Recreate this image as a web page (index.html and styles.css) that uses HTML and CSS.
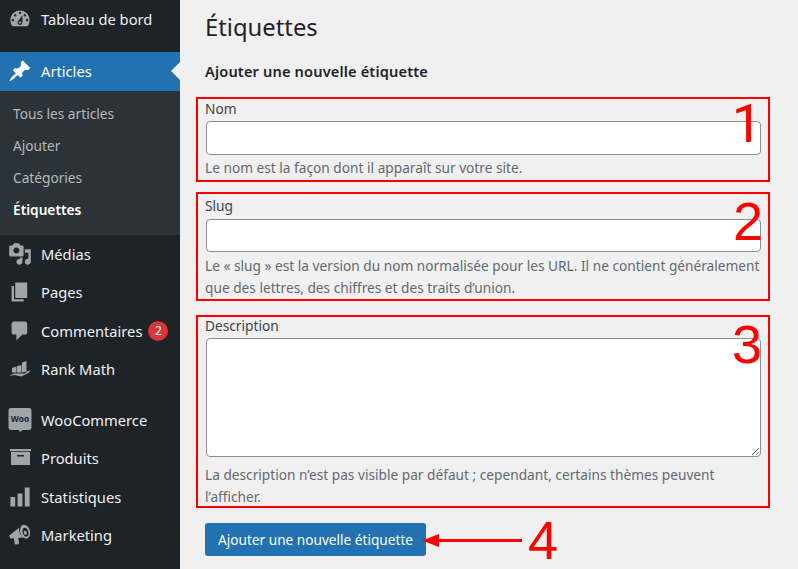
FILE: index.html
```html
<!DOCTYPE html>
<html lang="fr">
<head>
    <meta charset="UTF-8">
    <meta name="viewport" content="width=device-width, initial-scale=1.0">
    <title>Étiquettes</title>
    <link rel="stylesheet" href="styles.css">
</head>
<body>
    <div class="layout">
        <nav class="sidebar">
            <ul class="menu">
                <li class="menu-item">
                    <svg class="menu-icon" viewBox="0 0 20 20"><path d="M3.76 16h12.48c1.1-1.37 1.76-3.11 1.76-5 0-4.42-3.58-8-8-8s-8 3.58-8 8c0 1.89.66 3.63 1.76 5zM10 4c.55 0 1 .45 1 1s-.45 1-1 1-1-.45-1-1 .45-1 1-1zM6 6c.55 0 1 .45 1 1s-.45 1-1 1-1-.45-1-1 .45-1 1-1zm8 0c.55 0 1 .45 1 1s-.45 1-1 1-1-.45-1-1 .45-1 1-1zm-5.37 5.55L12 7v6c0 1.1-.9 2-2 2s-2-.9-2-2c0-.57.24-1.08.63-1.45zM4 10c.55 0 1 .45 1 1s-.45 1-1 1-1-.45-1-1 .45-1 1-1zm12 0c.55 0 1 .45 1 1s-.45 1-1 1-1-.45-1-1 .45-1 1-1zm-5 3c0-.55-.45-1-1-1s-1 .45-1 1 .45 1 1 1 1-.45 1-1z" fill-rule="evenodd"/></svg>
                    Tableau de bord
                </li>
            </ul>
            <ul class="menu menu-articles">
                <li class="menu-item active">
                    <svg class="menu-icon" viewBox="0 0 20 20"><path d="M10.44 3.02l1.82-1.82 6.36 6.35-1.83 1.82c-1.05-.68-2.48-.57-3.41.36l-.75.75c-.92.93-1.04 2.35-.35 3.41l-1.83 1.82-2.41-2.41-2.8 2.79c-.42.42-3.38 2.71-3.8 2.29s1.86-3.39 2.28-3.81l2.79-2.79L4.1 9.36l1.83-1.82c1.05.69 2.48.57 3.4-.36l.75-.75c.93-.92 1.05-2.35.36-3.41z"/></svg>
                    Articles
                </li>
            </ul>
            <ul class="submenu">
                <li>Tous les articles</li>
                <li>Ajouter</li>
                <li>Catégories</li>
                <li class="current">Étiquettes</li>
            </ul>
            <ul class="menu">
                <li class="menu-item">
                    <svg class="menu-icon" viewBox="0 0 20 20"><path d="M13 11V4c0-.55-.45-1-1-1h-1.67L9 1H5L3.67 3H2c-.55 0-1 .45-1 1v7c0 .55.45 1 1 1h10c.55 0 1-.45 1-1zM7 4.5c1.38 0 2.5 1.12 2.5 2.5S8.38 9.5 7 9.5 4.5 8.38 4.5 7 5.62 4.5 7 4.5zM14 6h5v10.5c0 1.38-1.12 2.5-2.5 2.5S14 17.88 14 16.5s1.12-2.5 2.5-2.5c.17 0 .34.02.5.05V9h-3V6zm-4 8.05V13h2v3.5c0 1.38-1.12 2.5-2.5 2.5S7 17.88 7 16.5 8.12 14 9.5 14c.17 0 .34.02.5.05z" fill-rule="evenodd"/></svg>
                    Médias
                </li>
                <li class="menu-item">
                    <svg class="menu-icon" viewBox="0 0 20 20"><path d="M6 15V2h10v13H6zm-1 1h8v2H3V5h2v11z"/></svg>
                    Pages
                </li>
                <li class="menu-item">
                    <svg class="menu-icon" viewBox="0 0 20 20"><path d="M5 2h9c1.1 0 2 .9 2 2v7c0 1.1-.9 2-2 2h-2l-5 5v-5H5c-1.1 0-2-.9-2-2V4c0-1.1.9-2 2-2z"/></svg>
                    Commentaires
                    <span class="badge">2</span>
                </li>
                <li class="menu-item">
                    <svg class="menu-icon" viewBox="0 0 24 24"><path d="M4 11l4.500-1.500v6H4zM9 9l4.500-1v7.500H9zM14 5.500L18.500 4v10.500L14 15.500zM1 19l5-2.500h11l2.500-2.500 3.500-.5-3.500 3L13 19.500 7 18z"/></svg>
                    Rank Math
                </li>
            </ul>
            <ul class="menu menu-shop">
                <li class="menu-item">
                    <svg class="menu-icon" viewBox="0 0 23 23">
                        <path d="M3 0h17a2.500 2.500 0 0 1 2.500 2.500v16a2.500 2.500 0 0 1-2.500 2.500h-6l-2.500 2-1-2H3a2.500 2.500 0 0 1-2.500-2.500v-16A2.500 2.500 0 0 1 3 0z"/>
                        <text class="woo-text" x="11.500" y="13.500">Woo</text>
                    </svg>
                    WooCommerce
                </li>
                <li class="menu-item">
                    <svg class="menu-icon" viewBox="0 0 24 24"><path d="M2 3h21v2.300H2zM3 6h19v13H3zM9 9v1.500h7V9z" fill-rule="evenodd"/></svg>
                    Produits
                </li>
                <li class="menu-item">
                    <svg class="menu-icon" viewBox="0 0 20 20"><path d="M18 18V2h-4v16h4zm-6 0V7H8v11h4zm-6 0v-8H2v8h4z"/></svg>
                    Statistiques
                </li>
                <li class="menu-item">
                    <svg class="menu-icon" viewBox="0 0 20 20"><path d="M18.150 5.940c.9 3.400-.3 6.300-2.300 6.900-2.100.600-4.600-1.300-5.500-4.400-.9-3.300.3-6.300 2.300-6.900 2.100-.6 4.600 1.200 5.500 4.400zM15.500 4.600c-1.300-1-2.700-.6-3.300.9-.5 1.700.2 4.100 1.500 5.300 1.300 1 2.800.6 3.300-1 .5-1.600-.2-4-1.500-5.200zM14 6.500c.8-.3 1.500.5 1.700 1.500.2 1-.2 1.800-.9 1.900-.7.100-1.300-.5-1.600-1.500-.2-1 .1-1.700.8-1.900zM9.200 3.900c-.3 2.800 1 6.600 3.300 8l-4 .5.800 4-.9 1.600-2.700-.3-.9-5L1.800 13 1 10.500z" fill-rule="evenodd"/></svg>
                    Marketing
                </li>
            </ul>
        </nav>

        <main class="content">
            <h1>Étiquettes</h1>
            <h2>Ajouter une nouvelle étiquette</h2>
            <form class="tag-form">
                <div class="field field-name">
                    <label for="tag-name">Nom</label>
                    <input type="text" id="tag-name">
                    <p>Le nom est la façon dont il apparaît sur votre site.</p>
                    <span class="number number-1">1</span>
                </div>
                <div class="field field-slug">
                    <label for="tag-slug">Slug</label>
                    <input type="text" id="tag-slug">
                    <p>Le « slug » est la version du nom normalisée pour les URL. Il ne contient généralement que des lettres, des chiffres et des traits d’union.</p>
                    <span class="number number-2">2</span>
                </div>
                <div class="field field-desc">
                    <label for="tag-desc">Description</label>
                    <textarea id="tag-desc"></textarea>
                    <p>La description n’est pas visible par défaut ; cependant, certains thèmes peuvent l’afficher.</p>
                    <span class="number number-3">3</span>
                </div>
                <div class="submit-row">
                    <button type="submit">Ajouter une nouvelle étiquette</button>
                    <svg class="arrow" viewBox="0 0 100 13"><path d="M0 6.500L17 0v5h83v3H17v5z"/></svg>
                    <span class="number number-4">4</span>
                </div>
            </form>
        </main>
    </div>
</body>
</html>
```

FILE: styles.css
```css
* {
    margin: 0;
    padding: 0;
    box-sizing: border-box;
}

html, body {
    height: 569px;
    overflow: hidden;
}

body {
    background: #f0f0f1;
    color: #3c434a;
    font-family: "Noto Sans", sans-serif;
    font-size: 13.7px;
}

.layout {
    display: grid;
    grid-template-columns: 180px 1fr;
    height: 569px;
}

/* sidebar */
.sidebar {
    background: #1d2327;
    color: #f0f0f1;
    overflow: hidden;
}

.menu {
    list-style: none;
    font-size: 14.7px;
}

.menu-articles {
    margin-top: 13px;
}

.menu-shop {
    margin-top: 12px;
}

.menu-item {
    position: relative;
    display: flex;
    align-items: center;
    height: 38.5px;
    padding-left: 8px;
    gap: 9px;
}

.menu-icon {
    width: 24px;
    height: 24px;
    flex: none;
    fill: #a0a5aa;
}

.menu-item.active {
    background: #2271b1;
    color: #fff;
    height: 39px;
}

.menu-item.active .menu-icon {
    fill: #fff;
}

.menu-item.active::after {
    content: "";
    position: absolute;
    right: 0;
    top: 50%;
    margin-top: -9px;
    border: 9px solid transparent;
    border-right-color: #f0f0f1;
    border-left-width: 0;
}

.woo-text {
    font-size: 8px;
    font-weight: 700;
    text-anchor: middle;
    fill: #1d2327;
}

.badge {
    width: 20px;
    height: 20px;
    margin-left: -3px;
    border-radius: 50%;
    background: #d63638;
    color: #fff;
    font-size: 12px;
    line-height: 20px;
    text-align: center;
}

.submenu {
    list-style: none;
    background: #2c3338;
    padding: 7.5px 0 8.5px 13px;
    color: #b4b9be;
}

.submenu li {
    height: 32px;
    line-height: 32px;
}

.submenu .current {
    color: #fff;
    font-weight: 600;
}

/* main form */
.content {
    padding: 0 28px 0 16px;
}

h1 {
    margin-left: 9px;
    padding-top: 10px;
    color: #1d2327;
    font-size: 23.8px;
    font-weight: 400;
    line-height: 34px;
}

h2 {
    margin: 17px 0 0 9px;
    color: #1d2327;
    font-size: 14.6px;
    font-weight: 600;
    letter-spacing: .15px;
    line-height: 20px;
    height: 36px;
}

.field {
    position: relative;
    border: 2px solid #f00;
    padding: 0 7px 0 8px;
    margin-bottom: 10px;
}

.field label {
    display: block;
    line-height: 20px;
    height: 22px;
    margin-left: -1px;
}

.field p {
    margin: 0 -5px 0 -1px;
    color: #646970;
    line-height: 22px;
    padding-top: 2px;
}

input, textarea {
    display: block;
    width: 100%;
    background: #fff;
    border: 1px solid #8c8f94;
    border-radius: 4px;
}

.field-name { height: 85px; }
.field-name input { height: 34px; }

.field-slug { height: 109px; }
.field-slug label {
    margin-top: 2px;
    height: 23px;
}
.field-slug input { height: 33px; }
.field-slug p { padding-top: 3px; }

.field-desc {
    height: 193px;
    margin-top: 14px;
    margin-bottom: 15px;
}
.field-desc label {
    margin-top: -1px;
    height: 22px;
}
.field-desc textarea {
    height: 119px;
    width: 555px;
}
.field-desc p { padding-top: 7px; }

.submit-row {
    position: relative;
    margin-left: 9px;
}

button {
    display: block;
    width: 221px;
    height: 33px;
    background: #2271b1;
    color: #fff;
    border: none;
    border-radius: 3px;
    font-family: inherit;
    font-size: 13.65px;
}

.number {
    position: absolute;
    color: #f00;
    font-family: "Liberation Sans", sans-serif;
    font-size: 54px;
    line-height: 44px;
}

/* Liberation's 1 has a foot, the reference's doesn't */
.number-1 {
    right: 6px;
    top: 3px;
    font-family: Roboto, sans-serif;
}
.number-2 { right: 5px; top: 5px; }
.number-3 { right: 6px; top: 5px; }
.number-4 { left: 323px; top: -5px; }

.arrow {
    position: absolute;
    left: 217px;
    top: 10.5px;
    width: 100px;
    height: 13px;
    fill: #f00;
}
```
